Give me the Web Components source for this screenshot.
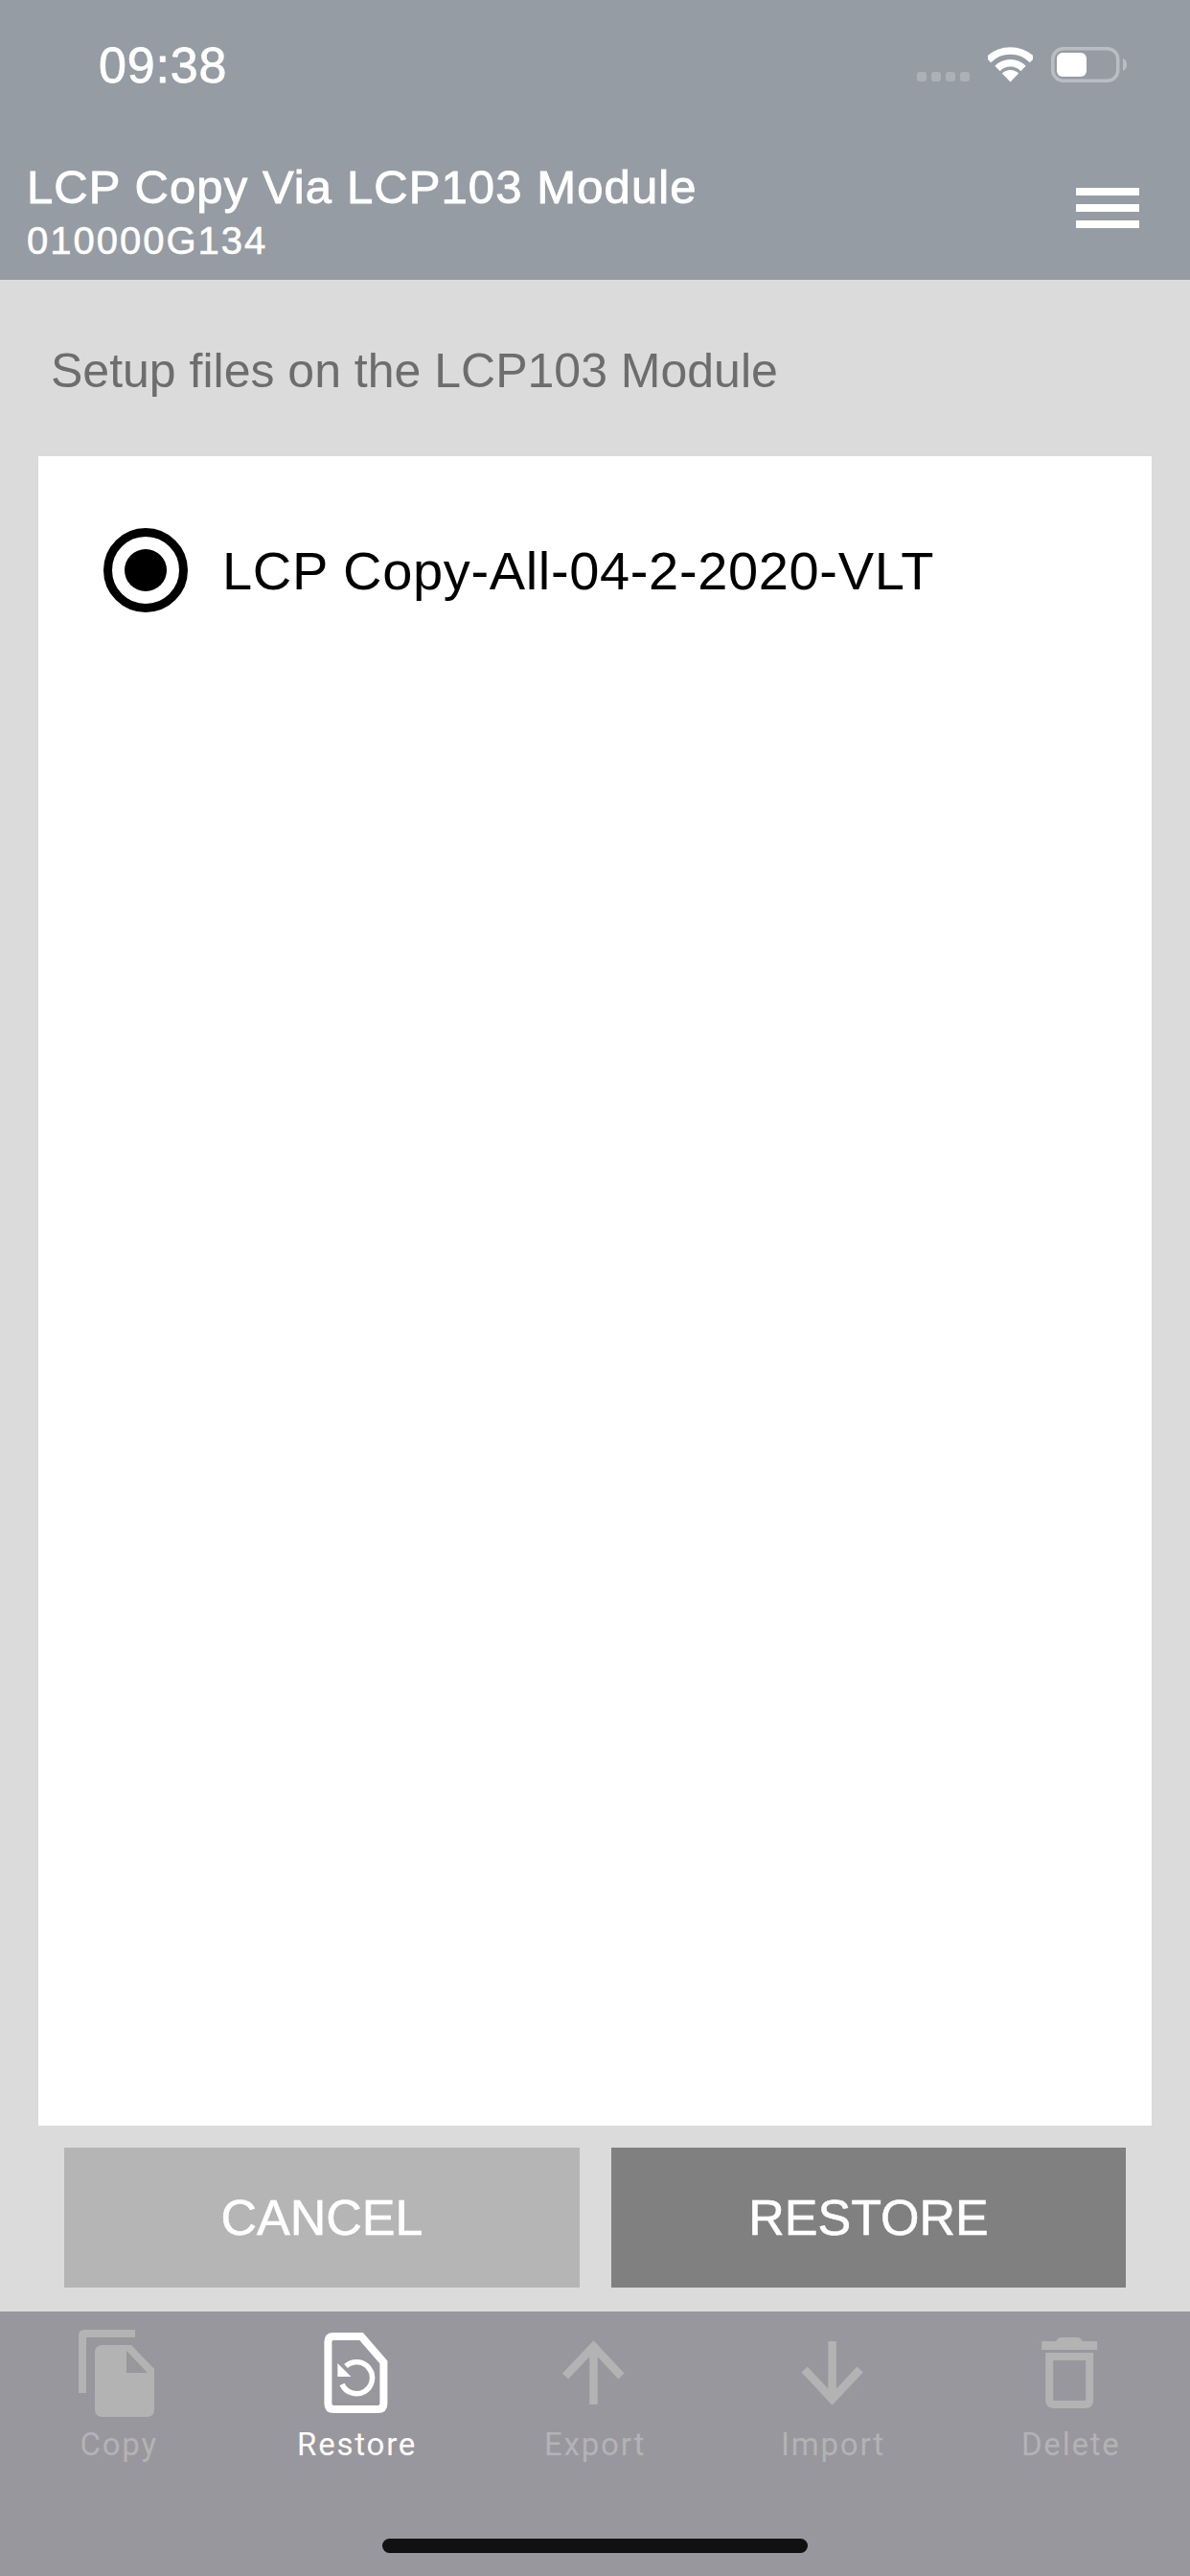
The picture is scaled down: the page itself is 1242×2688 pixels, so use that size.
<!DOCTYPE html>
<html>
<head>
<meta charset="utf-8">
<title>LCP Copy</title>
<style>
  html, body { margin: 0; padding: 0; }
  body { display: flex; flex-direction: column; width: 1242px; height: 2688px; overflow: hidden; font-family: "Liberation Sans", Arial, sans-serif; }
</style>
</head>
<body>

<template id="template-status-bar">
  <style>
    :host { display: flex; align-items: flex-start; height: 96px; padding: 0 65px 0 103px; box-sizing: border-box; color: #fff; }
    .time { font-size: 52px; line-height: 50px; margin-top: 43px; letter-spacing: 0.8px; -webkit-text-stroke: 0.8px #fff; }
    .icons { margin-left: auto; margin-top: 49px; display: flex; align-items: flex-start; }
    .dots { display: flex; gap: 5px; margin-top: 26px; margin-right: 19px; }
    .dots i { width: 10px; height: 10px; border-radius: 3px; background: rgba(255,255,255,.22); }
    .wifi { display: block; margin-right: 19px; }
    .battery { display: block; }
  </style>
  <div class="time"><slot></slot></div>
  <div class="icons">
    <div class="dots"><i></i><i></i><i></i><i></i></div>
    <svg class="wifi" width="47" height="37" viewBox="0 0 47 37">
      <g fill="none" stroke="#fff" stroke-width="7.5">
        <path d="M.5 13.5A32.5 32.5 0 0 1 46.5 13.5"/>
        <path d="M10 22.5A19 19 0 0 1 37 22.5"/>
      </g>
      <path fill="#fff" d="M23.5 36.5L14.8 27.6A12.4 12.4 0 0 1 32.2 27.6Z"/>
    </svg>
    <svg class="battery" width="80" height="38" viewBox="0 0 80 38">
      <rect x="1.75" y="1.75" width="68" height="33.5" rx="11" fill="none" stroke="#b9bec4" stroke-width="3.5"/>
      <rect x="6" y="6" width="31" height="25" rx="6" fill="#fff"/>
      <path d="M75 12C78 13 79 16 79 18.5C79 21 78 24 75 25Z" fill="#b9bec4"/>
    </svg>
  </div>
</template>

<template id="template-app-header">
  <style>
    :host { display: flex; flex-direction: column; height: 292px; background: #959ca3; color: #fff; flex: none; }
    .row { display: flex; align-items: flex-start; padding: 0 53px 0 28px; }
    .title { font-size: 49px; line-height: 56px; margin-top: 71px; letter-spacing: 1.1px; -webkit-text-stroke: 0.9px #fff; white-space: nowrap; }
    .sub { font-size: 40px; line-height: 44px; margin-top: 6px; letter-spacing: 2px; -webkit-text-stroke: 0.6px #fff; }
    .menu { margin-left: auto; margin-top: 100px; width: 66px; display: flex; flex-direction: column; gap: 9px; }
    .menu i { display: block; height: 8px; background: #fff; }
  </style>
  <status-bar>09:38</status-bar>
  <div class="row">
    <div>
      <div class="title"><slot name="title"></slot></div>
      <div class="sub"><slot name="sub"></slot></div>
    </div>
    <div class="menu"><i></i><i></i><i></i></div>
  </div>
</template>

<template id="template-file-list">
  <style>
    :host { display: flex; flex-direction: column; flex: 1; min-height: 0; background: #dbdbdb; padding: 0 40px; box-sizing: border-box; }
    .heading { font-size: 50px; line-height: 60px; color: #6d6d6d; padding: 65px 0 0 13px; height: 184px; box-sizing: border-box; flex: none; }
    .card { flex: 1; background: #fff; padding: 73px 0 0 68px; }
  </style>
  <div class="heading"><slot name="heading"></slot></div>
  <div class="card"><slot></slot></div>
</template>

<template id="template-file-option">
  <style>
    :host { display: flex; align-items: center; gap: 36px; color: #000; font-size: 56px; line-height: 88px; letter-spacing: 0.65px; }
    .radio { width: 88px; height: 88px; box-sizing: border-box; border: 9px solid #000; border-radius: 50%; display: flex; align-items: center; justify-content: center; flex: none; }
    .radio i { width: 44px; height: 44px; border-radius: 50%; background: #000; }
    .text { margin-top: 3px; }
  </style>
  <div class="radio"><i></i></div>
  <div class="text"><slot></slot></div>
</template>

<template id="template-action-bar">
  <style>
    :host { display: grid; grid-template-columns: 538px 537px; justify-content: space-between; height: 194px; padding: 23px 67px 25px; box-sizing: border-box; background: #dbdbdb; flex: none; }
  </style>
  <slot></slot>
</template>

<template id="template-action-button">
  <style>
    :host { display: flex; align-items: center; justify-content: center; background: #b5b5b5; color: #fff; font-size: 52px; -webkit-text-stroke: 0.6px #fff; }
    :host([primary]) { background: #808080; }
  </style>
  <slot></slot>
</template>

<template id="template-tab-bar">
  <style>
    :host { display: flex; flex-direction: column; height: 276px; background: #98979d; flex: none; }
    .tabs { display: grid; grid-template-columns: repeat(5, 1fr); padding-top: 16px; }
    .home { width: 444px; height: 15px; border-radius: 8px; background: #111; margin: auto auto 24px; }
  </style>
  <div class="tabs"><slot></slot></div>
  <div class="home"></div>
</template>

<template id="template-tab-item">
  <style>
    :host { display: flex; flex-direction: column; align-items: center; color: #b3b3b3; font-family: Roboto, sans-serif; font-size: 33px; letter-spacing: 1.8px; line-height: 40px; }
    :host([active]) { color: #fff; }
    ::slotted(svg) { display: block; width: 100px; height: 100px; }
    .label { margin-top: 3px; }
  </style>
  <slot name="icon"></slot>
  <div class="label"><slot></slot></div>
</template>

<app-header>
  <span slot="title">LCP Copy Via LCP103 Module</span>
  <span slot="sub">010000G134</span>
</app-header>

<file-list>
  <span slot="heading">Setup files on the LCP103 Module</span>
  <file-option>LCP Copy-All-04-2-2020-VLT</file-option>
</file-list>

<action-bar>
  <action-button>CANCEL</action-button>
  <action-button primary>RESTORE</action-button>
</action-bar>

<tab-bar>
  <tab-item>
    <svg slot="icon" viewBox="0 0 100 100">
      <path d="M67 7H14Q12 7 12 9V69" fill="none" stroke="currentColor" stroke-width="8"/>
      <path d="M33 19H63L87 44V86Q87 94 79 94H33Q25 94 25 86V27Q25 19 33 19Z" fill="currentColor"/>
      <path d="M58 25V48H80Z" fill="#98979d"/>
    </svg>
    Copy
  </tab-item>
  <tab-item active>
    <svg slot="icon" viewBox="0 0 100 100">
      <path d="M25 10H54L77.4 37V80Q77.4 86 71.4 86H25.4Q19.4 86 19.4 80V15.6Q19.4 10 25 10Z" fill="none" stroke="currentColor" stroke-width="8"/>
      <path d="M38 41A16.5 16.5 0 1 1 34 60" fill="none" stroke="currentColor" stroke-width="5.5"/>
      <path d="M29.4 38V52H43.4Z" fill="currentColor"/>
    </svg>
    Restore
  </tab-item>
  <tab-item>
    <svg slot="icon" viewBox="0 0 100 100">
      <path d="M48.5 81V20M19 51.5L48.5 20.5L77.5 51.5" fill="none" stroke="currentColor" stroke-width="8.5"/>
    </svg>
    Export
  </tab-item>
  <tab-item>
    <svg slot="icon" viewBox="0 0 100 100">
      <path d="M49.6 15V76M20.6 44.5L49.6 75.5L78.6 44.5" fill="none" stroke="currentColor" stroke-width="8.5"/>
    </svg>
    Import
  </tab-item>
  <tab-item>
    <svg slot="icon" viewBox="0 0 100 100">
      <path d="M19.2 15H34L37 11.5Q38 11 40 11H56Q58 11 59 11.5L62 15H77.2V24H19.2Z" fill="currentColor"/>
      <path d="M27.2 31H69.2V76Q69.2 81 64.2 81H32.2Q27.2 81 27.2 76Z" fill="none" stroke="currentColor" stroke-width="8"/>
    </svg>
    Delete
  </tab-item>
</tab-bar>

<script>
  (function() {

    class TemplatedElement extends HTMLElement {
      connectedCallback() {
        if (this.shadowRoot) return;
        const templateContent = document.getElementById('template-' + this.localName).content;
        this.attachShadow({mode: 'open'}).appendChild(templateContent.cloneNode(true));
      }
    }

    ['status-bar', 'app-header', 'file-list', 'file-option', 'action-bar', 'action-button', 'tab-bar', 'tab-item'].forEach(function(name) {
      customElements.define(name, class extends TemplatedElement {});
    });

  })();
</script>
</body>
</html>
